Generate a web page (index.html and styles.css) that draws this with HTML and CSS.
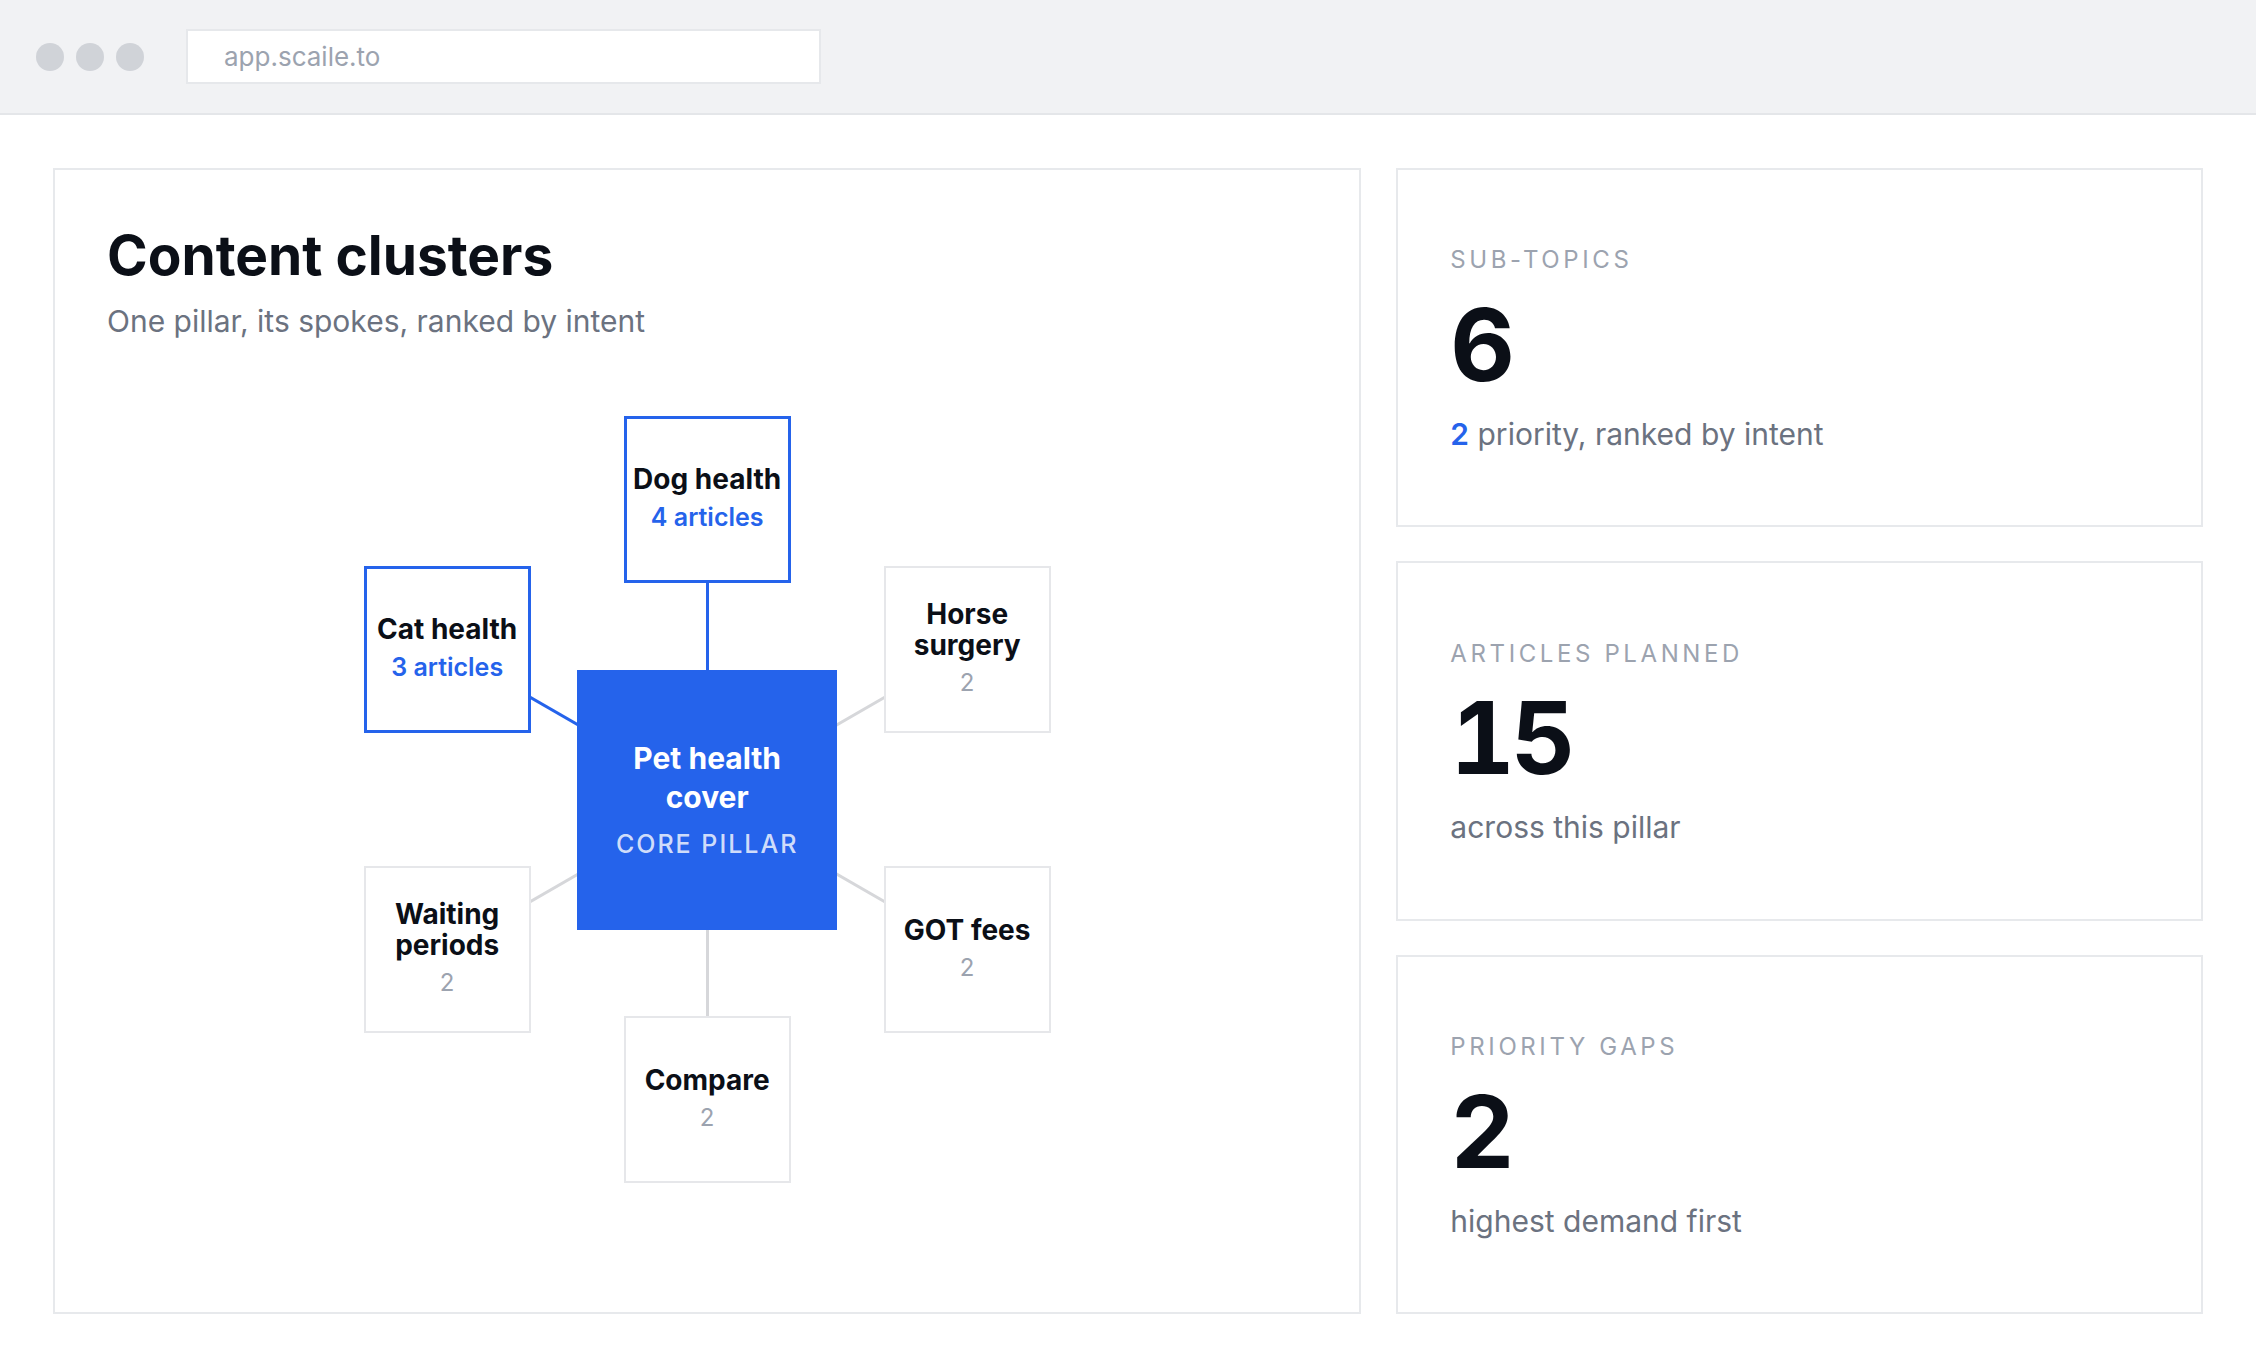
FILE: index.html
```html
<!DOCTYPE html>
<html lang="en">
<head>
<meta charset="utf-8">
<title>Content clusters</title>
<link rel="stylesheet" href="styles.css">
</head>
<body>
<div class="window">
  <header class="chrome">
    <div class="dots"><span></span><span></span><span></span></div>
    <div class="url">app.scaile.to</div>
  </header>
  <main class="content">
    <section class="card clusters">
      <h1 class="title">Content clusters</h1>
      <p class="subtitle">One pillar, its spokes, ranked by intent</p>
      <div class="diagram">
        <svg class="links" viewBox="0 0 687 767" width="687" height="767" aria-hidden="true">
          <line class="link link-gray" x1="343.5" y1="383.5" x2="603.5" y2="233.5"/>
          <line class="link link-gray" x1="343.5" y1="383.5" x2="83.5" y2="533.5"/>
          <line class="link link-gray" x1="343.5" y1="383.5" x2="603.5" y2="533.5"/>
          <line class="link link-gray" x1="343.5" y1="383.5" x2="343.5" y2="683.5"/>
          <line class="link link-blue" x1="343.5" y1="383.5" x2="343.5" y2="83.5"/>
          <line class="link link-blue" x1="343.5" y1="383.5" x2="83.5" y2="233.5"/>
        </svg>
        <div class="node node-active pos-dog">
          <div class="node-title">Dog health</div>
          <div class="node-count">4 articles</div>
        </div>
        <div class="node node-active pos-cat">
          <div class="node-title">Cat health</div>
          <div class="node-count">3 articles</div>
        </div>
        <div class="node pos-horse">
          <div class="node-title">Horse<br>surgery</div>
          <div class="node-count">2</div>
        </div>
        <div class="node pos-waiting">
          <div class="node-title">Waiting<br>periods</div>
          <div class="node-count">2</div>
        </div>
        <div class="node pos-got">
          <div class="node-title">GOT fees</div>
          <div class="node-count">2</div>
        </div>
        <div class="node pos-compare">
          <div class="node-title">Compare</div>
          <div class="node-count">2</div>
        </div>
        <div class="pillar">
          <div class="pillar-title">Pet health<br>cover</div>
          <div class="pillar-tag">CORE PILLAR</div>
        </div>
      </div>
    </section>
    <aside class="stats">
      <div class="card stat">
        <div class="stat-label">Sub-topics</div>
        <div class="stat-value">6</div>
        <div class="stat-desc"><span class="accent">2</span> priority, ranked by intent</div>
      </div>
      <div class="card stat">
        <div class="stat-label">Articles planned</div>
        <div class="stat-value">15</div>
        <div class="stat-desc">across this pillar</div>
      </div>
      <div class="card stat">
        <div class="stat-label">Priority gaps</div>
        <div class="stat-value">2</div>
        <div class="stat-desc">highest demand first</div>
      </div>
    </aside>
  </main>
</div>
</body>
</html>
```

FILE: styles.css
```css
* { box-sizing: border-box; }

html, body {
  margin: 0;
  padding: 0;
  background: #ffffff;
}

body {
  font-family: Inter, "Noto Sans", "Liberation Sans", sans-serif;
  color: #0b0f17;
  overflow: hidden;
}

.window {
  width: 100vw;
  height: 100vh;
  display: flex;
  flex-direction: column;
}

/* Browser chrome */
.chrome {
  flex: 0 0 auto;
  height: 115px;
  background: #f1f2f4;
  border-bottom: 2px solid #e4e6e9;
  display: flex;
  align-items: center;
  padding: 0 0 0 36px;
}

.dots {
  display: flex;
  gap: 12px;
}

.dots span {
  width: 28px;
  height: 28px;
  border-radius: 50%;
  background: #d0d3d8;
}

.url {
  margin-left: 42px;
  width: 635px;
  height: 55px;
  background: #ffffff;
  border: 2px solid #e6e8eb;
  display: flex;
  align-items: center;
  padding-left: 36px;
  font-size: 26px;
  color: #9ca3af;
}

/* Main layout */
.content {
  flex: 1 1 auto;
  display: grid;
  grid-template-columns: minmax(0, 1.622fr) minmax(0, 1fr);
  gap: 35px;
  padding: 53px 53px 54px;
}

.card {
  background: #ffffff;
  border: 2px solid #e7e9ec;
}

.clusters {
  padding: 52px 52px;
}

.title {
  margin: 0;
  font-size: 55px;
  line-height: 1.2;
  font-weight: 700;
  color: #0b0f17;
}

.subtitle {
  margin: 12px 0 0;
  font-size: 30px;
  line-height: 1.4;
  color: #6b7280;
}

/* Diagram */
.diagram {
  position: relative;
  width: 687px;
  height: 767px;
  margin: 74px auto 0;
}

.links {
  position: absolute;
  left: 0;
  top: 0;
}

.link {
  stroke-width: 3;
}

.link-gray { stroke: #d6d7da; }
.link-blue { stroke: #2563eb; }

.node {
  position: absolute;
  width: 167px;
  height: 167px;
  background: #ffffff;
  border: 2px solid #e6e7ea;
  display: flex;
  flex-direction: column;
  align-items: center;
  justify-content: center;
  text-align: center;
}

.node-active {
  border: 3px solid #2563eb;
}

.pos-dog { left: 260px; top: 0; }
.pos-cat { left: 0; top: 150px; }
.pos-horse { left: 520px; top: 150px; }
.pos-waiting { left: 0; top: 450px; }
.pos-got { left: 520px; top: 450px; }
.pos-compare { left: 260px; top: 600px; }

.node-title {
  font-size: 28px;
  line-height: 1.1;
  font-weight: 700;
  color: #0b0f17;
  white-space: nowrap;
}

.node-count {
  margin-top: 5px;
  font-size: 24px;
  line-height: 1.4;
  color: #9ca3af;
}

.node-active .node-count {
  font-size: 25px;
  color: #2563eb;
  font-weight: 600;
}

.pillar {
  position: absolute;
  left: 50%;
  top: 50%;
  width: 260px;
  height: 260px;
  transform: translate(-50%, -50%);
  background: #2563eb;
  display: flex;
  flex-direction: column;
  align-items: center;
  justify-content: center;
  text-align: center;
}

.pillar-title {
  font-size: 30px;
  line-height: 1.3;
  font-weight: 700;
  color: #ffffff;
}

.pillar-tag {
  margin-top: 11px;
  font-size: 25px;
  line-height: 1.3;
  font-weight: 500;
  letter-spacing: 0.08em;
  color: rgba(255, 255, 255, 0.8);
}

/* Stats column */
.stats {
  display: grid;
  grid-template-rows: repeat(3, minmax(0, 1fr));
  gap: 34px;
}

.stat {
  display: flex;
  flex-direction: column;
  justify-content: center;
  padding: 6px 52px 0;
}

.stat-label {
  font-size: 24px;
  line-height: 1.2;
  letter-spacing: 0.15em;
  text-transform: uppercase;
  color: #9ca3af;
}

.stat-value {
  margin-top: 20px;
  font-size: 100px;
  line-height: 1;
  font-weight: 700;
  font-variant-numeric: tabular-nums;
  letter-spacing: -0.04em;
  color: #0b0f17;
}

.stat-desc {
  margin-top: 18px;
  font-size: 30px;
  line-height: 1.4;
  color: #6b7280;
}

.accent {
  color: #2563eb;
  font-weight: 600;
}
```
